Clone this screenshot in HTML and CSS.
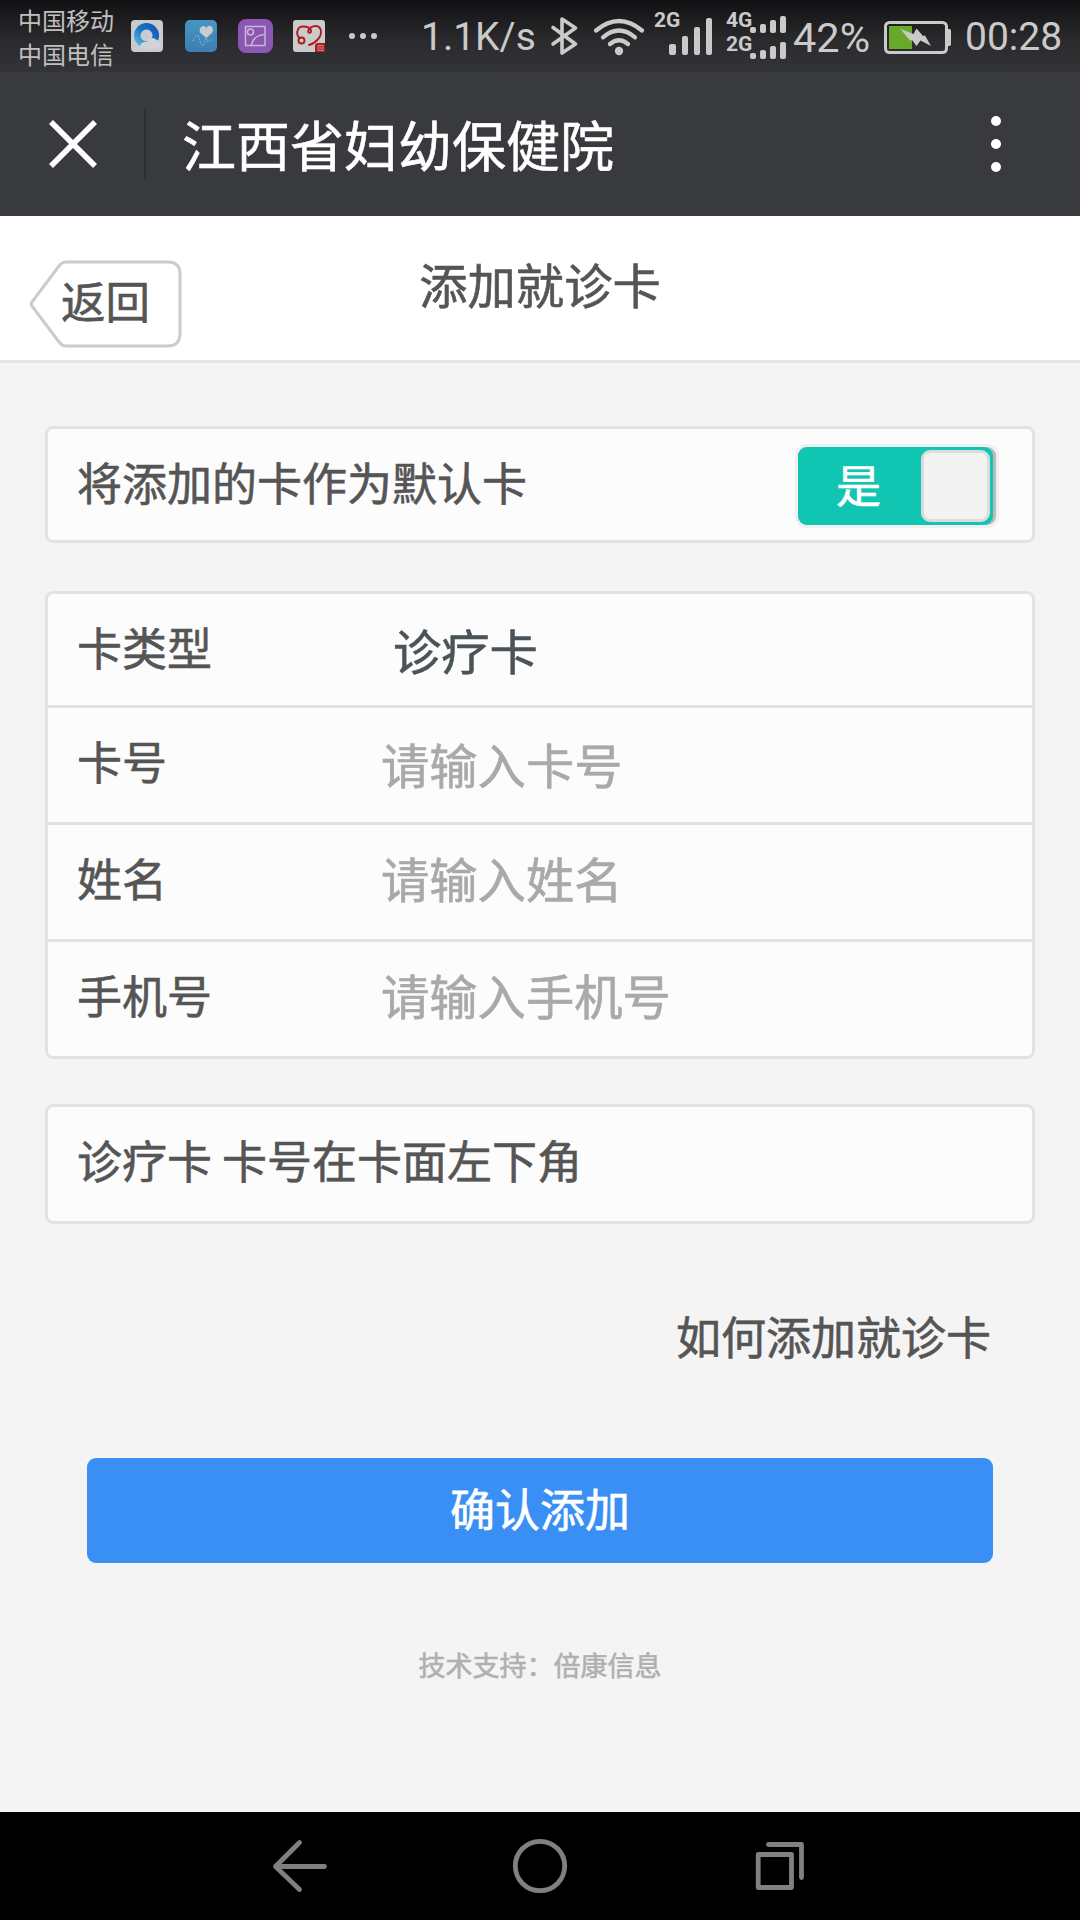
FILE: index.html
```html
<!DOCTYPE html>
<html lang="zh-CN">
<head>
<meta charset="utf-8">
<title>添加就诊卡</title>
<link rel="stylesheet" href="styles.css">
</head>
<body>
<div class="status">
  <div class="carriers"><span>中国移动</span><span>中国电信</span></div>
  <svg class="apps" width="250" height="72" viewBox="131 0 250 72">
    <defs>
      <linearGradient id="ring" x1="0" y1="1" x2="1" y2="0"><stop offset="0" stop-color="#5db4dc"/><stop offset=".5" stop-color="#1677c4"/><stop offset="1" stop-color="#1258b8"/></linearGradient>
      <linearGradient id="sky" x1="0" y1="0" x2="0" y2="1"><stop offset="0" stop-color="#4596c0"/><stop offset="1" stop-color="#3d7eb4"/></linearGradient>
    </defs>
    <rect x="131" y="20" width="32" height="32" rx="4" fill="#c9cbcf"/>
    <circle cx="146.500" cy="35.500" r="9.300" fill="none" stroke="url(#ring)" stroke-width="6.500"/>
    <path d="M141 49a4 4 0 0 1 1-6 6 6 0 0 1 5-1 6 6 0 0 1 10-2 5 5 0 0 1 2 8q-2 1-5 1z" fill="#d0d3d8"/>
    <rect x="185" y="20" width="32" height="32" rx="5" fill="url(#sky)"/>
    <path d="M206.300 38L201 33.500C197 29 203 22.500 206.300 28 209.500 22.500 216 28.500 211.500 33.500Z" fill="#c8ccd0"/>
    <path d="M192 41l3-4 3-2 3 9 2 2 3-8 2 4 2-2h3" fill="none" stroke="#8abbd2" stroke-width="1" stroke-dasharray="1.500 1"/>
    <rect x="238" y="19" width="35" height="34" rx="8" fill="#8b57b3"/>
    <g fill="none" stroke="#c9b7d6" stroke-width="1.500"><rect x="245.500" y="26.500" width="19.500" height="19"/><circle cx="250.500" cy="32" r="3"/><path d="M251.500 45c1-6 6-10 13-10.500"/></g>
    <rect x="293" y="20" width="32" height="32" rx="3" fill="#cbcbcb"/>
    <g fill="none" stroke="#ad1b24" stroke-width="1.900" stroke-linecap="round"><circle cx="301.500" cy="40.500" r="3"/><path d="M299.500 38C295.500 34 297 27 302.500 26.500 307 26 311.500 28.500 311 31.500 310.500 34 307 32.500 308.500 30 311 25.500 318 24.500 320.500 29 323 36 316 43 309 45"/></g>
    <path d="M315 52v-6q0-3 3-3h7v6q0 3-3 3z" fill="#ad1b24"/>
    <path d="M318 45.500h5v5h-5zm1 1l3 3m0-3l-3 3" fill="none" stroke="#d59a9d" stroke-width=".8"/>
    <g fill="#cacaca"><circle cx="352" cy="36" r="3"/><circle cx="363" cy="36" r="3"/><circle cx="374" cy="36" r="3"/></g>
  </svg>
  <span class="speed">1.1K/s</span>
  <svg class="radio" width="96" height="72" viewBox="550 0 96 72" fill="none" stroke="#cacaca">
    <path d="M553 27.500l22.500 16.500-13.500 9V19l13.500 9L553 44" stroke-width="3.600" stroke-linecap="round" stroke-linejoin="round"/>
    <path d="M596 30.500q23-19 46 0M603 37.300q16-13.500 32 0M610 44q9-7.500 18 0" stroke-width="4.300" stroke-linecap="round"/>
    <circle cx="619" cy="51" r="4.200" fill="#cacaca" stroke="none"/>
  </svg>
  <div class="sim sim-one"><span>2G</span>
    <svg class="bars" width="46" height="72" viewBox="668 0 46 72" fill="#cacaca"><rect x="669" y="44" width="7" height="11" rx="2"/><rect x="682" y="36" width="6" height="19" rx="2"/><rect x="694" y="27" width="6" height="28" rx="2"/><rect x="706" y="18" width="6" height="37" rx="2"/></svg>
  </div>
  <div class="sim sim-two"><span>4G</span><span>2G</span>
    <svg class="bars" width="38" height="72" viewBox="749 0 38 72" fill="#cacaca"><rect x="750" y="27" width="6" height="6" rx="2"/><rect x="760" y="24" width="6" height="9" rx="2"/><rect x="770" y="20" width="6" height="13" rx="2"/><rect x="780" y="16" width="6" height="17" rx="2"/><rect x="750" y="53" width="6" height="6" rx="2"/><rect x="760" y="50" width="6" height="9" rx="2"/><rect x="770" y="46" width="6" height="13" rx="2"/><rect x="780" y="42" width="6" height="17" rx="2"/></svg>
  </div>
  <span class="percent">42%</span>
  <svg class="battery" width="68" height="72" viewBox="884 0 68 72">
    <rect x="885.500" y="22.500" width="61" height="30" rx="4" fill="none" stroke="#cacaca" stroke-width="3"/>
    <rect x="889" y="26" width="23" height="23" fill="#69a82a"/>
    <path d="M947 29h2.500q1.500 0 1.500 2v13q0 2-1.500 2H947z" fill="#cacaca"/>
    <path d="M900.500 29l13 5 3-5.500 6.500 7.500 2-.5 6 10.500-10.500-5.500-4 5.500-4.500-6-2 .5z" fill="#cacaca"/>
  </svg>
  <span class="clock">00:28</span>
</div>

<div class="appbar">
  <svg class="close" width="48" height="48" viewBox="0 0 48 48"><path d="M2 2l44 44M46 2L2 46" stroke="#fff" stroke-width="5.600"/></svg>
  <i class="rule"></i>
  <span class="app-title">江西省妇幼保健院</span>
  <svg class="more" width="10" height="56" viewBox="0 0 10 56" fill="#fff"><circle cx="5" cy="5" r="5"/><circle cx="5" cy="28" r="5"/><circle cx="5" cy="51" r="5"/></svg>
</div>

<header class="page-head">
  <a class="back">
    <svg class="back-shape" width="154" height="88" viewBox="0 0 154 88"><path d="M37 2H139Q151 2 151 14V73Q151 86 139 86H37Q33 86 30 82L3 46Q1.500 44 3 42L30 6Q33 2 37 2Z" fill="#fff" stroke="#ccc" stroke-width="3"/></svg>
    <span class="back-text">返回</span>
  </a>
  <h1>添加就诊卡</h1>
</header>

<main>
  <section class="card default-card">
    <span class="label">将添加的卡作为默认卡</span>
    <div class="toggle"><div class="toggle-on"><span>是</span><i class="knob"></i></div></div>
  </section>
  <section class="card fields">
    <div class="row type"><span class="label">卡类型</span><span class="value">诊疗卡</span></div>
    <div class="row number"><span class="label">卡号</span><span class="hint">请输入卡号</span></div>
    <div class="row"><span class="label">姓名</span><span class="hint">请输入姓名</span></div>
    <div class="row"><span class="label">手机号</span><span class="hint">请输入手机号</span></div>
  </section>
  <section class="card note"><span class="label">诊疗卡 卡号在卡面左下角</span></section>
  <a class="help">如何添加就诊卡</a>
  <div class="submit">确认添加</div>
  <footer>技术支持：倍康信息</footer>
</main>

<nav>
  <svg width="1080" height="108" viewBox="0 1812 1080 108" fill="none" stroke="#808080" stroke-width="4.800" stroke-linecap="round" stroke-linejoin="round">
    <path d="M324.500 1866.500H275.500M299.500 1842.500L275.500 1866.500 299.500 1889.500"/>
    <circle cx="540" cy="1866" r="24.700"/>
    <path d="M758.200 1854.500H791.500V1887.500H758.200ZM768.500 1844.500H801.500V1877.500"/>
  </svg>
</nav>
</body>
</html>
```
FILE: styles.css
```css
* { box-sizing: border-box; }
body {
  margin: 0;
  width: 1080px;
  height: 1920px;
  display: flex;
  flex-direction: column;
  overflow: hidden;
  background: #f4f4f4;
  color: #555;
  font-family: "Noto Sans CJK SC", sans-serif;
}
svg { display: block; flex: none; }
span, h1, a { white-space: nowrap; }
.app-title, .page-head, main { -webkit-text-stroke: 0.6px; }

.status {
  height: 72px;
  display: flex;
  background: linear-gradient(#111113, #2a2a2d 55%, #333438);
  color: #cacaca;
  font-family: Roboto, sans-serif;
  font-size: 39px;
  line-height: 75px;
}
.carriers {
  width: 131px;
  padding: 3px 0 0 18px;
  display: flex;
  flex-direction: column;
  font: 24px/34px "Noto Sans CJK SC", sans-serif;
  color: #c0c0c0;
}
.speed { width: 129px; margin-left: 40px; }
.sim {
  position: relative;
  display: flex;
  flex-direction: column;
  font-size: 21px;
  font-weight: 700;
}
.sim-one { width: 72px; margin-left: 8px; padding-top: 8px; line-height: 24px; }
.sim-two { width: 67px; padding-top: 8px; line-height: 24px; }
.bars { position: absolute; top: 0; }
.sim-one .bars { left: 14px; }
.sim-two .bars { left: 23px; }
.percent { width: 91px; font-size: 41.5px; }
.clock { margin-left: 13px; }

.appbar {
  height: 144px;
  padding: 0 79px 0 49px;
  display: flex;
  align-items: center;
  background: #393a3e;
}
.rule { width: 2px; height: 72px; margin: 0 36px 0 47px; background: #2e2f33; }
.app-title { flex: 1; color: #fff; font-size: 54px; line-height: 80px; padding-bottom: 1px; }

.page-head {
  position: relative;
  height: 147px;
  background: #fff;
  border-bottom: 3px solid #e5e5e5;
}
h1 {
  margin: 0;
  padding-top: 27px;
  font-size: 48.3px;
  font-weight: 400;
  line-height: 80px;
  text-align: center;
}
.back { position: absolute; left: 29px; top: 44px; }
.back-text { position: absolute; left: 32px; top: 7px; font-size: 44.5px; line-height: 66px; }

main { flex: 1; padding: 63px 45px 0; display: flex; flex-direction: column; }
.card {
  background: #fcfcfc;
  border: 3px solid #e2e2e2;
  border-radius: 8px;
  padding-left: 29px;
}
.label { font-size: 45px; line-height: 106px; }
.default-card { height: 117px; display: flex; justify-content: space-between; padding-right: 33px; }
.toggle {
  width: 204px;
  height: 84px;
  margin-top: 15px;
  border: 3px solid #f0f0f0;
  border-radius: 12px;
  background: #bbb;
}
.toggle-on {
  width: 195px;
  height: 78px;
  padding: 0 3px 0 38px;
  display: flex;
  justify-content: space-between;
  align-items: center;
  border-radius: 9px;
  background: #11c5b3;
  color: #fff;
  font-size: 45px;
  line-height: 66px;
}
.toggle-on span { padding-bottom: 4px; }
.knob { width: 69px; height: 72px; background: #f3f3f3; border: 3px solid #dcdcdc; border-radius: 9px; }

.fields { height: 468px; margin-top: 48px; padding-left: 0; }
.row { height: 117px; padding-left: 29px; display: grid; grid-template-columns: 304px 1fr; border-bottom: 3px solid #e2e2e2; }
.row:last-child { border-bottom: 0; height: 114px; }
.type { height: 114px; }
.value, .hint { font-size: 48.3px; line-height: 104px; }
.value { padding-left: 12px; color: #4b5357; line-height: 110px; }
.hint { color: #a9a9a9; }
.number .hint { line-height: 110px; }
.note { height: 120px; margin-top: 45px; }
.help { margin-top: 79px; padding-right: 44px; font-size: 45px; line-height: 66px; text-align: right; }
.submit {
  height: 105px;
  margin: 89px 42px 0;
  border-radius: 9px;
  background: #398ff3;
  color: #fff;
  font-size: 45px;
  line-height: 100px;
  text-align: center;
}
footer { margin-top: 82px; font-size: 27px; line-height: 40px; color: #b0b0b0; text-align: center; }

nav { height: 108px; background: #000; }
```
